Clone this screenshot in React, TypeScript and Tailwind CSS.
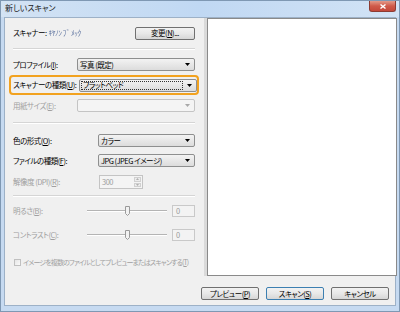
import React from "react";

function Arrow({ disabled }: { disabled?: boolean }) {
  return (
    <svg width="5" height="3" viewBox="0 0 5 3">
      <polygon points="0,0 5,0 2.5,3" fill={disabled ? "#a8a8a8" : "#000"} />
    </svg>
  );
}

function Combo({
  value,
  w,
  disabled,
  focus,
}: {
  value: string;
  w: string;
  disabled?: boolean;
  focus?: boolean;
}) {
  return (
    <div
      className={`flex h-[13px] ${w} shrink-0 items-center rounded-[2px] border pr-[4px] pl-[1px] ${
        disabled
          ? "border-[#c4c4c4] bg-[#f4f4f4]"
          : "border-[#8e8f8f] bg-gradient-to-b from-[#f3f3f3] to-[#dcdcdc]"
      }`}
    >
      <div
        className={`flex h-[9px] flex-1 items-center pl-[1px] leading-none ${
          focus ? "border border-dotted border-[#333]" : ""
        }`}
      >
        {value}
      </div>
      <div className="ml-[4px] flex items-center">
        <Arrow disabled={disabled} />
      </div>
    </div>
  );
}

function Btn({
  children,
  w,
  primary,
}: {
  children: React.ReactNode;
  w: string;
  primary?: boolean;
}) {
  return (
    <div
      className={`flex h-[13px] ${w} items-center justify-center rounded-[2px] border leading-none bg-gradient-to-b from-[#f2f2f2] via-[#e8e8e8] to-[#d6d6d6] ${
        primary ? "border-[#3c7fb1]" : "border-[#707070]"
      }`}
    >
      {children}
    </div>
  );
}

function Slider() {
  return (
    <div className="relative flex h-[12px] w-[80px] shrink-0 items-center">
      <div className="h-[2px] w-full border-t border-b border-t-[#b4b4b4] border-b-white" />
      <svg
        className="absolute top-[1px] left-[38px]"
        width="5"
        height="10"
        viewBox="0 0 5 10"
      >
        <polygon points="0.5,0.5 4.5,0.5 4.5,7.5 2.5,9.5 0.5,7.5" fill="#f2f2f2" stroke="#9a9a9a" />
      </svg>
    </div>
  );
}

function Sep() {
  return <div className="h-[2px] border-t border-b border-t-[#d5d5d5] border-b-white" />;
}

function NumBox() {
  return (
    <div className="flex h-[12px] w-[23px] items-center border border-[#c9c9c9] bg-[#f3f3f3] pl-[3px] leading-none text-[#9a9a9a]">
      0
    </div>
  );
}

export default function App() {
  return (
    <div className="flex h-[312px] w-[400px] flex-col whitespace-nowrap border border-[#7f98b3] bg-[#c6daf1] font-['Noto_Sans_CJK_JP',sans-serif] text-[7.5px] tracking-[-0.5px] text-black [font-feature-settings:'palt']">
      {/* タイトルバー */}
      <div className="flex h-[16px] items-start bg-gradient-to-r from-[#d3e3f4] via-[#c0d8f3] to-[#d2e3f5]">
        <div className="pt-[3px] pl-[4px] text-[8px] leading-none tracking-normal text-[#1a1a1a]">新しいスキャン</div>
        <div className="ml-auto mr-[3px] flex h-[11px] w-[27px] items-center justify-center rounded-b-[3px] border border-t-0 border-[#8d3b32] bg-gradient-to-b from-[#e29a8a] via-[#cf5a4a] to-[#c4483a]">
          <svg width="6" height="5" viewBox="0 0 6 5">
            <path d="M0.5 0.5 L5.5 4.5 M5.5 0.5 L0.5 4.5" stroke="#fff" strokeWidth="1.4" />
          </svg>
        </div>
      </div>

      <div className="mx-[3px] mb-[5px] flex flex-1 border border-[#9db1c7] bg-[#f0f0f0]">
        {/* 左側の設定 */}
        <div className="flex w-[196px] shrink-0 flex-col overflow-hidden pr-[6px] pl-[8px]">
          <div className="mt-[8px] flex h-[14px] items-center justify-between">
            <div className="flex items-center">
              <span>スキャナー:</span>
              <span className="ml-[2px] text-[#6479a3] blur-[0.7px]">ｷﾔﾉﾝ ﾌﾞ ﾒｯｸ</span>
            </div>
            <Btn w="w-[60px]">
              変更(<u>N</u>)...
            </Btn>
          </div>

          <div className="mt-[8px]">
            <Sep />
          </div>

          <div className="mt-[8px] flex h-[13px] items-center justify-between">
            <span>
              プロファイル(<u>I</u>):
            </span>
            <Combo value="写真 (既定)" w="w-[118px]" />
          </div>

          <div className="-mx-[4px] mt-[4px] flex h-[20px] items-center justify-between rounded-[4px] border-2 border-[#f2a21f] pl-[2px]">
            <span>
              スキャナーの種類(<u>U</u>):
            </span>
            <Combo value="フラットベッド" w="w-[118px]" focus />
          </div>

          <div className="mt-[4px] flex h-[13px] items-center justify-between text-[#a0a0a0]">
            <span>
              用紙サイズ(<u>E</u>):
            </span>
            <Combo value="" w="w-[118px]" disabled />
          </div>

          <div className="mt-[10px]">
            <Sep />
          </div>

          <div className="mt-[10px] flex h-[13px] items-center justify-between">
            <span>
              色の形式(<u>O</u>):
            </span>
            <Combo value="カラー" w="w-[97px]" />
          </div>

          <div className="mt-[7px] flex h-[13px] items-center justify-between">
            <span>
              ファイルの種類(<u>F</u>):
            </span>
            <Combo value="JPG (JPEG イメージ)" w="w-[97px]" />
          </div>

          <div className="mt-[8px] flex h-[14px] items-center text-[#a0a0a0]">
            <span className="w-[86px]">
              解像度 (DPI)(<u>R</u>):
            </span>
            <div className="flex h-[14px] w-[44px] border border-[#c4c4c4] bg-[#f4f4f4]">
              <div className="flex flex-1 items-center pl-[2px] leading-none">300</div>
              <div className="flex w-[9px] flex-col gap-[1px] p-[1px]">
                <div className="flex flex-1 items-center justify-center border border-[#d0d0d0] bg-[#ececec]">
                  <svg width="3" height="2" viewBox="0 0 3 2">
                    <polygon points="0,2 3,2 1.5,0" fill="#b0b0b0" />
                  </svg>
                </div>
                <div className="flex flex-1 items-center justify-center border border-[#d0d0d0] bg-[#ececec]">
                  <svg width="3" height="2" viewBox="0 0 3 2">
                    <polygon points="0,0 3,0 1.5,2" fill="#b0b0b0" />
                  </svg>
                </div>
              </div>
            </div>
          </div>

          <div className="mt-[6px]">
            <Sep />
          </div>

          <div className="mt-[8px] flex h-[12px] items-center text-[#a0a0a0]">
            <span className="w-[75px]">
              明るさ(<u>B</u>):
            </span>
            <Slider />
            <div className="ml-[5px]">
              <NumBox />
            </div>
          </div>

          <div className="mt-[12px] flex h-[12px] items-center text-[#a0a0a0]">
            <span className="w-[75px]">
              コントラスト(<u>C</u>):
            </span>
            <Slider />
            <div className="ml-[5px]">
              <NumBox />
            </div>
          </div>

          <div className="mt-[17px] flex h-[9px] items-center text-[#a0a0a0]">
            <div className="ml-[1px] h-[7px] w-[7px] shrink-0 border border-[#c0c0c0] bg-gradient-to-br from-[#e6e6e6] to-[#fafafa]" />
            <span className="ml-[2px] text-[7px] tracking-[-0.9px]">
              イメージを複数のファイルとしてプレビューまたはスキャンする(<u>T</u>)
            </span>
          </div>
        </div>

        {/* プレビュー */}
        <div className="flex flex-1 flex-col">
          <div className="ml-[3px] mr-[1px] h-[258px] border-l-[3px] border-l-[#dadada]">
            <div className="h-full border border-[#8a8a8a] bg-white" />
          </div>
          <div className="mt-[11px] flex justify-end gap-[7px] pr-[9px]">
            <Btn w="w-[58px]">
              プレビュー(<u>P</u>)
            </Btn>
            <Btn w="w-[58px]" primary>
              スキャン(<u>S</u>)
            </Btn>
            <Btn w="w-[58px]">キャンセル</Btn>
          </div>
        </div>
      </div>
    </div>
  );
}
